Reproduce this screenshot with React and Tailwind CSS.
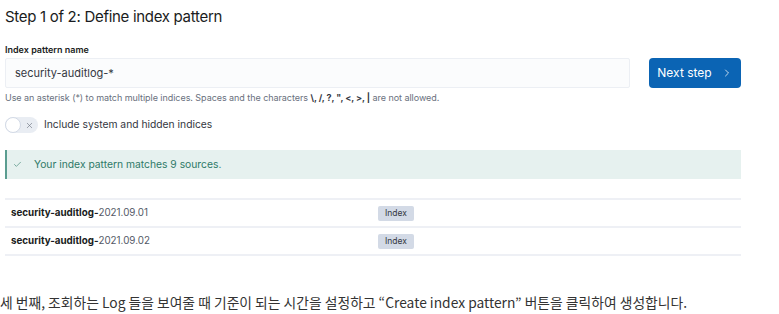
import { Check, ChevronRight, X } from "lucide-react";

const rows = ["2021.09.01", "2021.09.02"];

export default function App() {
  return (
    <div className="w-[779px] h-[314px] overflow-hidden bg-white font-['Inter',sans-serif]">
      <div className="pl-[5px] w-[741px]">
        <h1 className="mt-[7px] text-[15px] leading-[20px] text-[#1a1c21] tracking-[-0.3px]">
          Step 1 of 2: Define index pattern
        </h1>

        <div className="mt-[17px] text-[9px] leading-[12px] font-semibold text-[#1a1c21]">Index pattern name</div>

        <div className="mt-[2px] flex gap-[19px]">
          <div className="flex-1 h-[30px] flex items-center px-[9px] bg-[#fbfcfd] border border-[#eceff4] rounded-[2px] text-[11px] text-[#343741]">
            security-auditlog-*
          </div>
          <button className="w-[92px] h-[30px] rounded-[4px] bg-[#0b64b4] text-white text-[12px] flex items-center justify-center gap-[9px]">
            Next step
            <ChevronRight size={12} strokeWidth={1.5} />
          </button>
        </div>

        <p className="mt-[4px] text-[9px] leading-[12px] text-[#69707d] tracking-[-0.05px]">
          Use an asterisk (*) to match multiple indices. Spaces and the characters{" "}
          <b className="text-[#343741]">\, /, ?, ", &lt;, &gt;, |</b> are not allowed.
        </p>

        <div className="mt-[13px] flex items-center gap-[6px] h-[16px]">
          <div className="relative w-[33px] h-[16px] rounded-full bg-[#e9edf3]">
            <div className="absolute left-0 top-0 w-[16px] h-[16px] rounded-full bg-white border border-[#d3dae6]" />
            <X size={9} strokeWidth={1.6} className="absolute left-[20px] top-[3.5px] text-[#69707d]" />
          </div>
          <span className="text-[10.3px] text-[#343741]">Include system and hidden indices</span>
        </div>

        <div className="mt-[17px] h-[29px] flex items-center bg-[#e6f1ef] border-l-2 border-[#5a9d90] pl-[6px] gap-[12px] text-[10.3px] text-[#2f7a68]">
          <Check size={9} strokeWidth={1.6} />
          <span>Your index pattern matches 9 sources.</span>
        </div>

        <div className="mt-[19px] border-t-2 border-[#eef0f5]">
          {rows.map((d) => (
            <div key={d} className="grid grid-cols-2 h-[28px] items-center border-b-2 border-[#eef0f5]">
              <div className="pl-[6px] text-[9.8px] text-[#343741]">
                <span className="font-bold text-[#1a1c21]">security-auditlog-</span>
                <span className="text-[#535966]">{d}</span>
              </div>
              <div className="pl-[5px] flex items-center">
                <span className="h-[15px] leading-[15px] px-[7px] rounded-[2px] bg-[#d3dae6] text-[8.5px] text-[#343741]">
                  Index
                </span>
              </div>
            </div>
          ))}
        </div>
      </div>

      <p className="mt-[37px] text-[13.8px] leading-[18px] text-[#333] font-['Noto_Sans_CJK_KR',sans-serif] whitespace-nowrap">
        세 번째, 조회하는 Log 들을 보여줄 때 기준이 되는 시간을 설정하고 “Create index pattern” 버튼을 클릭하여 생성합니다.
      </p>
    </div>
  );
}
